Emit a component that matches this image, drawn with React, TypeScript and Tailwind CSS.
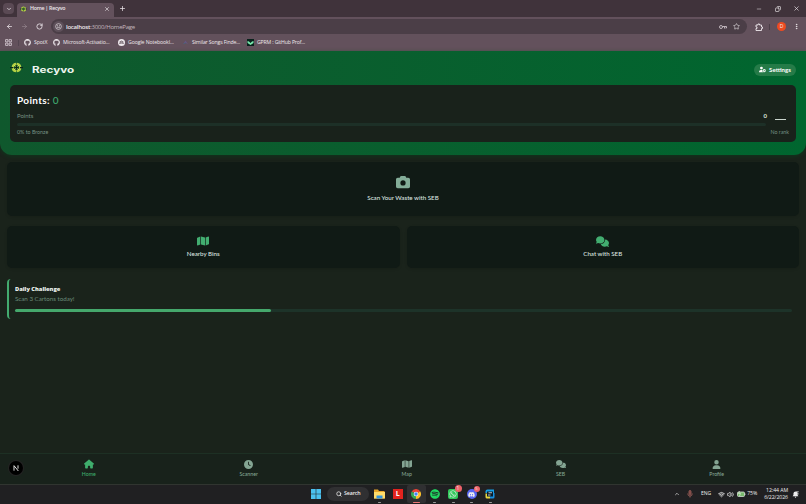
import type { ReactNode } from "react";
import { FaCamera, FaMap, FaComments, FaHouse, FaClock, FaUser, FaUserGear, FaGithub, FaSpotify, FaWhatsapp, FaDiscord } from "react-icons/fa6";
import { ArrowLeft, ArrowRight, RotateCw, ChevronDown, ChevronUp, X, Plus, Minus, Copy, Star, Search, Wifi, Volume2, EllipsisVertical } from "lucide-react";

function RecycleMark({ className }: { className: string }) {
  return (
    <svg viewBox="0 0 26 22" className={className}>
      <circle cx="13" cy="11" r="7.5" fill="#245f2b" stroke="#b4d044" strokeWidth="4.5" strokeDasharray="10.5 1.28" />
      <path d="M0 11h6M20 11h6M9 11h8M13 7v8" stroke="#0b281a" strokeWidth="2.5" />
      <path d="m8 6 3 3M18 6l-3 3M8 16l3-3M18 16l-3-3" stroke="#dce960" strokeWidth="1.8" />
    </svg>
  );
}

function Bookmark({ icon, label, className }: { icon: ReactNode; label: string; className: string }) {
  return (
    <div className={`flex shrink-0 items-center gap-[3px] whitespace-nowrap ${className}`}>
      <span className="flex w-[7px] shrink-0 justify-center">{icon}</span>
      <span>{label}</span>
    </div>
  );
}

function BrowserChrome() {
  return (
    <div className="h-[51px] bg-[#63515c] font-[family-name:Open_Sans,Noto_Sans,sans-serif] text-[#eee8ec]">
      <div className="flex h-[17px] bg-[#40333b]">
        <div className="ml-[3px] mt-[3px] flex size-[11px] items-center justify-center rounded-[4px] bg-[#5a4a54]">
          <ChevronDown size={6} strokeWidth={3} />
        </div>
        <div className="ml-[3px] mt-[3px] flex h-[14px] w-[97px] items-center rounded-t-[4px] bg-[#63515c] pb-[2px] pl-[3px] pr-[4px]">
          <RecycleMark className="h-[6px] w-[7px]" />
          <span className="ml-[3px] grow whitespace-nowrap text-[5.3px] font-semibold tracking-[-0.28px]">Home | Recyvo</span>
          <X size={6} strokeWidth={2.5} />
        </div>
        <Plus size={7} strokeWidth={2.5} className="ml-[5px] mt-[5px]" />
        <div className="grow" />
        <div className="flex w-[50px] items-center justify-between pr-[6px]">
          <Minus size={6} />
          <Copy size={6} strokeWidth={2.5} className="-scale-x-100" />
          <X size={7} strokeWidth={2.2} />
        </div>
      </div>
      <div className="flex h-[19px] items-center pl-[6px]">
        <ArrowLeft size={7} strokeWidth={2.5} />
        <ArrowRight size={7} strokeWidth={2} className="ml-[8px] text-[#9d8d96]" />
        <RotateCw size={7} strokeWidth={2.8} className="ml-[8px]" />
        <div className="ml-[8px] flex h-[15px] w-[696px] items-center rounded-full bg-[#4b3e47] pl-[2px] pr-[7px]">
          <span className="flex size-[11px] items-center justify-center rounded-full bg-[#5e505a]">
            <svg viewBox="0 0 14 14" className="size-[7px]" fill="none" stroke="#eee8ec" strokeWidth="1.3"><circle cx="7" cy="7" r="5.7" /><path d="M4 5.5h2M8 5.5h2M4 8.5h6" /></svg>
          </span>
          <span className="ml-[2px] grow whitespace-nowrap text-[6.1px] tracking-[-0.28px] text-[#c4b7bf]">
            <span className="font-semibold text-[#eee8ec]">localhost</span>:3000/HomePage
          </span>
          <svg viewBox="0 0 16 8" className="h-[4px] w-[8px]" fill="none" stroke="#d2c7ce" strokeWidth="1.7"><circle cx="4" cy="4" r="3" /><path d="M7 3h8v3h-2M11 4v3" /></svg>
          <Star size={7} strokeWidth={2} className="ml-[6px]" />
        </div>
        <svg viewBox="0 0 16 16" className="ml-[8px] size-[8px]" fill="none" stroke="#eee8ec" strokeWidth="1.8"><path d="M2 4h4V2h3v2h4v4h2v3h-2v4H2v-4h2V8H2z" /></svg>
        <span className="ml-[6px] h-[6px] w-px bg-[#4b3e47]" />
        <span className="ml-[7px] flex size-[9px] items-center justify-center rounded-full bg-[#ee4b20] text-[5px]">D</span>
        <EllipsisVertical size={7} strokeWidth={3} className="ml-[7px]" />
      </div>
      <div className="flex h-[13px] items-center pl-[5px] text-[5.2px] font-medium">
        <svg viewBox="0 0 12 12" className="size-[7px] shrink-0" fill="none" stroke="#d9ced5" strokeWidth="1.4">
          <path d="M1 1h4v4H1zM7 1h4v4H7zM1 7h4v4H1zM7 7h4v4H7z" />
        </svg>
        <span className="ml-[6px] mr-[5px] h-[6px] w-px bg-[#534550]" />
        <Bookmark className="w-[29px] tracking-[-0.1px]" icon={<FaGithub size={7} />} label="SpotX" />
        <Bookmark className="w-[65px] tracking-[-0.13px]" icon={<FaGithub size={7} />} label="Microsoft-Activatio..." />
        <Bookmark className="w-[64px] tracking-[-0.11px]" icon={
          <svg viewBox="0 0 14 14" className="size-[7px]"><circle cx="7" cy="7" r="7" fill="#eee8ec" /><path d="M3 10a4 4 0 0 1 8 0M5 10a2 2 0 0 1 4 0M3 6q4-4 8 0" fill="none" stroke="#493b45" strokeWidth="1.2" /></svg>
        } label="Google Notebookl..." />
        <Bookmark className="w-[65px] tracking-[-0.14px]" icon={
          <svg viewBox="0 0 14 14" className="size-[7px]"><path d="M2 10 7 3l5 7-5-2z" fill="#655681" /><path d="m2 10 5-3v2z" fill="#3a6c79" /></svg>
        } label="Similar Songs Finde..." />
        <Bookmark className="tracking-[-0.17px]" icon={
          <svg viewBox="0 0 14 14" className="size-[7px]"><path fill="#09221c" d="M0 0h14v14H0z" /><path fill="#78e8ad" d="m1 4 3 1 3 3 3-3 3-1v4l-3 2-3 2-3-2-3-2z" /></svg>
        } label="GPRM : GitHub Prof..." />
      </div>
    </div>
  );
}

function ActionCard({ icon, label, className }: { icon: ReactNode; label: string; className: string }) {
  return (
    <div className={`flex flex-col items-center rounded-[5px] bg-[#101a15] text-[6.2px] font-medium text-[#dde5e0] shadow-[0_1px_3px_rgba(0,0,0,0.12)] ${className}`}>
      {icon}
      <span className="whitespace-nowrap leading-[8px]">{label}</span>
    </div>
  );
}

function NavItem({ icon, label, active = false }: { icon: ReactNode; label: string; active?: boolean }) {
  return (
    <div className={`flex flex-col items-center gap-[2px] ${active ? "text-[#3fae6d]" : "text-[#84a593]"}`}>
      {icon}
      <span className="text-[5.2px] font-medium leading-[6px]">{label}</span>
    </div>
  );
}

function Page() {
  return (
    <div className="relative flex h-[433px] flex-col bg-[#1a231b] font-[family-name:Lato,Open_Sans,sans-serif]">
      <header className="h-[104px] rounded-b-[12px] bg-linear-to-r from-[#0f582d] to-[#00662f] px-[10px] shadow-[0_1px_4px_rgba(0,80,30,0.45)]">
        <div className="flex h-[33.5px] items-center pt-[4px]">
          <RecycleMark className="mb-[5px] h-[11px] w-[13px]" />
          <span className="ml-[9px] origin-left scale-x-[1.3] font-[family-name:Inter,sans-serif] text-[9px] font-bold leading-[12px] text-[#edf5ee]">Recyvo</span>
          <div className="ml-auto flex h-[12px] w-[42px] items-center justify-center gap-[3px] rounded-full bg-[#257b48] text-white">
            <FaUserGear size={7} />
            <span className="text-[6.1px] font-bold">Settings</span>
          </div>
        </div>
        <div className="h-[57px] rounded-[5px] bg-[#19221b] px-[7px] pt-[9.5px]">
          <div className="text-[10px] font-bold leading-[13px] tracking-[0.35px] text-white">
            Points: <span className="font-medium text-[#40aa70]">0</span>
          </div>
          <div className="mt-[4px] flex items-center justify-between text-[6px] leading-[10px] text-[#759082]">
            <span>Points</span>
            <b className="mr-[22px] text-[#dce5df]">0</b>
          </div>
          <div className="flex h-[8px] items-start">
            <span className="mt-[2px] h-[3px] grow rounded-full bg-[#1d3027]" />
            <span className="ml-[9px] mr-[3px] -mt-[2px] h-px w-[11px] bg-[#cbd6cf]" />
          </div>
          <div className="flex justify-between text-[5.3px] leading-[6px] text-[#759082]">
            <span>0% to Bronze</span><span>No rank</span>
          </div>
        </div>
      </header>
      <main className="px-[7px] pt-[7px]">
        <ActionCard className="h-[54px] gap-[5px] pt-[13px]" icon={<FaCamera size={14} className="text-[#83ad98]" />} label="Scan Your Waste with SEB" />
        <div className="mt-[10px] grid grid-cols-2 gap-[7px]">
          <ActionCard className="h-[42px] gap-[3px] pt-[9px]" icon={<FaMap size={12} className="text-[#42ad70]" />} label="Nearby Bins" />
          <ActionCard className="h-[42px] gap-[3px] pt-[9px]" icon={<FaComments size={13} className="-mb-px text-[#42ad70]" />} label="Chat with SEB" />
        </div>
        <section className="mt-[11px] h-[40px] rounded-[4px] border-l-2 border-[#43ab6f] pl-[6px] pr-[7px] pt-[6px]">
          <div className="font-[family-name:Open_Sans,sans-serif] text-[5.7px] font-extrabold leading-[9px] text-[#edf3ef]">Daily Challenge</div>
          <div className="text-[6.2px] leading-[9px] text-[#6c8c7a]">Scan 3 Cartons today!</div>
          <div className="mt-[6px] h-[3px] rounded-full bg-[#1d3329]">
            <div className="h-full w-[33%] rounded-full bg-[#45a86c]" />
          </div>
        </section>
      </main>
      <nav className="mt-auto flex h-[31px] items-center justify-around border-t border-[#1d3024] bg-[#18221b] px-[10px] pb-[2px]">
        <NavItem active icon={<FaHouse size={10} />} label="Home" />
        <NavItem icon={<FaClock size={9} />} label="Scanner" />
        <NavItem icon={<FaMap size={10} />} label="Map" />
        <NavItem icon={<FaComments size={10} />} label="SEB" />
        <NavItem icon={<FaUser size={9} />} label="Profile" />
      </nav>
      <div className="absolute left-[9px] top-[410px] flex size-[14px] items-center justify-center rounded-full bg-black text-white shadow-[0_0_0_1px_#242424]">
        <svg viewBox="0 0 12 12" className="size-[8px]" fill="none" stroke="currentColor" strokeWidth="1.3"><path d="M3 10V2.5L9.5 10.5M9 2v5" /></svg>
      </div>
    </div>
  );
}

function TaskApp({ children, className = "", open = false }: { children: ReactNode; className?: string; open?: boolean }) {
  return (
    <div className={`relative flex h-[18px] w-[18.5px] shrink-0 items-center justify-center ${className}`}>
      {children}
      {open && <span className="absolute bottom-0 h-px w-[3px] rounded-full bg-[#9a9a9a]" />}
    </div>
  );
}

function Taskbar() {
  return (
    <div className="flex h-[20px] items-center border-t border-[#303530] bg-[#202022] pb-px font-[family-name:Open_Sans,Noto_Sans,sans-serif] text-[#eee]">
      <svg viewBox="0 0 20 20" className="ml-[311px] size-[10px]"><path fill="#4bc1ef" d="M0 0h9.4v9.4H0zM10.6 0H20v9.4h-9.4zM0 10.6h9.4V20H0zM10.6 10.6H20V20h-9.4z" /></svg>
      <div className="ml-[6px] flex h-[14px] w-[42px] items-center gap-[2px] rounded-full bg-[#303032] pl-[9px] text-[5.3px] font-semibold tracking-[-0.12px]">
        <Search size={6} strokeWidth={3} />Search
      </div>
      <TaskApp open className="ml-[1px]">
        <svg viewBox="0 0 22 20" className="h-[10px] w-[11px]"><path fill="#e6a628" d="M0 1h8l2 3h11v15H0z" /><path fill="#ffdc69" d="M0 6h22v13H0z" /><path fill="#3294de" d="M5 13h12v6H5z" /></svg>
      </TaskApp>
      <TaskApp><span className="flex size-[10px] items-center justify-center bg-[#e2231e] text-[7px] font-bold text-white">L</span></TaskApp>
      <TaskApp className="rounded-[2px] bg-[#303032]">
        <svg viewBox="0 0 24 24" className="size-[10px]">
          <path fill="#e94436" d="M12 12 1.6 6a12 12 0 0 1 20.8 0z" />
          <path fill="#34a853" d="M12 12v12A12 12 0 0 1 1.6 6z" />
          <path fill="#fbc02d" d="M12 12 22.4 6A12 12 0 0 1 12 24z" />
          <circle cx="12" cy="12" r="5.5" fill="white" /><circle cx="12" cy="12" r="4.2" fill="#4285f4" />
        </svg>
        <span className="absolute bottom-0 h-px w-[7px] rounded-full bg-[#ee7774]" />
      </TaskApp>
      <TaskApp open><FaSpotify size={10} className="text-[#20d761]" /></TaskApp>
      <TaskApp open>
        <span className="flex size-[10px] items-center justify-center rounded-[2px] bg-[#31c95b]"><FaWhatsapp size={8} /></span>
        <span className="absolute right-[1px] top-0 flex size-[7px] items-center justify-center rounded-full bg-[#ed6168] text-[5px]">1</span>
      </TaskApp>
      <TaskApp open>
        <span className="flex size-[10px] items-center justify-center rounded-full bg-[#5865f2]"><FaDiscord size={7} /></span>
        <span className="absolute right-[1px] top-[1px] flex size-[6px] items-center justify-center rounded-full bg-[#ed6168] text-[3px]">9+</span>
      </TaskApp>
      <TaskApp open>
        <svg viewBox="0 0 20 20" className="size-[10px]"><path fill="#159fe6" d="M1 5q0-4 4-4h13v7H1z" /><path fill="#e7d741" d="M1 9h9v10H4q-3 0-3-3z" /><path fill="#168ee0" d="M10 8h9v8q0 3-3 3h-6z" /><path fill="#081b28" d="M4 5h12v10H4z" /><path d="M7 7.5h7M6 12h5" stroke="white" strokeWidth="1.5" /></svg>
      </TaskApp>
      <div className="ml-auto flex items-center pr-[7px]">
        <ChevronUp size={6} strokeWidth={2.5} />
        <svg viewBox="0 0 12 16" className="ml-[7px] h-[8px] w-[6px]" fill="none" stroke="#a8655f" strokeWidth="1.6"><rect x="4" y="1" width="4" height="8" rx="2" fill="#74403d" /><path d="M1.5 7q0 5 4.500 5t4.500-5M6 12v3" /></svg>
        <span className="ml-[8px] text-[5px] font-medium">ENG</span>
        <Wifi size={7} strokeWidth={2.8} className="ml-[7px]" />
        <Volume2 size={7} strokeWidth={2.4} className="ml-[2px]" />
        <svg viewBox="0 0 18 12" className="ml-[3px] h-[6px] w-[9px]"><rect x="1" y="2" width="14" height="9" rx="2" fill="#78ba6d" stroke="#dce4d9" strokeWidth="1.5" /><path d="M16 5v3M5 0 3 5h4l-2 5" stroke="#e6eddf" strokeWidth="1.4" fill="none" /></svg>
        <span className="ml-px text-[5.2px] tracking-[-0.08px]">75%</span>
        <div className="ml-[7px] text-right text-[5.2px] leading-[7px] tracking-[-0.08px]"><div>12:44 AM</div><div>6/22/2026</div></div>
        <svg viewBox="0 0 12 12" className="ml-[4px] size-[7px]"><path d="M1 9 2.500 7V4Q3 1 6 1t3.500 3v3L11 9zM4.500 10h3l-1.500 2z" fill="#eee" /><path d="M7 1h4L8 5h4" stroke="#eee" fill="none" /></svg>
      </div>
    </div>
  );
}

export default function App() {
  return (
    <div className="flex h-[504px] w-[806px] flex-col overflow-hidden">
      <BrowserChrome />
      <Page />
      <Taskbar />
    </div>
  );
}
